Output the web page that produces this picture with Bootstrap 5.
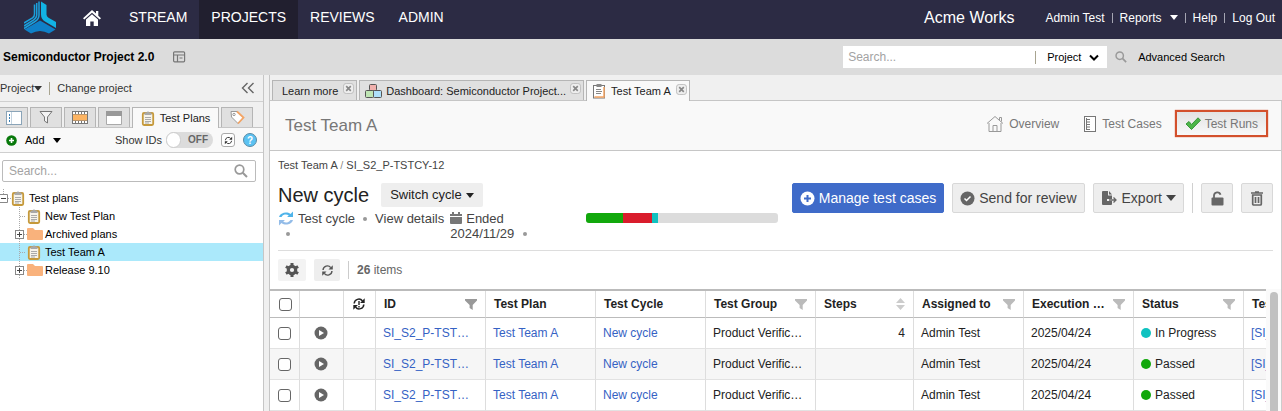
<!DOCTYPE html>
<html lang="en">
<head>
<meta charset="utf-8">
<meta name="viewport" content="width=device-width, initial-scale=1">
<title>Test Team A - Test Runs</title>
<link href="https://cdn.jsdelivr.net/npm/bootstrap@5.3.0/dist/css/bootstrap.min.css" rel="stylesheet">
<style>
body{font-family:"Liberation Sans",Arial,sans-serif;font-size:11px;line-height:16px;color:#222;background:#fff}
a{color:inherit;text-decoration:none}
svg{display:block;flex:none}
button{font:inherit;color:inherit;border:0;background:none;padding:0}
.caret{width:0;height:0;flex:none;border:4px solid transparent;border-top:5px solid currentColor;border-bottom:0}
.top-bar{background:#2c2b44;color:#fff;height:39px}
.top-bar .logo-link{margin:0 15px 4px 24px}
.main-nav a{font-size:14px;padding:0 12px 6px;height:39px;display:flex;align-items:center}
.main-nav a.active{background:#211f2f}
.top-user{font-size:12px;gap:7px;padding:0 7px 4px 31px}
.top-user .bar{width:1px;height:10px;background:#a5a5b2}
.org{font-size:16px;padding-bottom:4px}
.project-bar{background:#dcdcdc;height:36px;color:#000;padding:0 57px 0 3px}
.project-name{font-size:12px;font-weight:bold;margin:0}
.find-box{background:#fff;width:264px;height:22px}
.find-box input{border:0;outline:0;width:192px;font-size:12px;padding:0 5px}
.find-box select{border:0;outline:0;background:transparent;appearance:none;font-size:11px;padding:0;width:42px;color:#000}
::placeholder{color:#a3a3a3;opacity:1}
.find-rule{width:1px;height:13px;background:#a8a490}
.adv{margin-left:11px}
.side{width:264px;flex:none;border-right:1px solid #c6c6c6;background:#fff}
.gutter{width:6px;flex:none;background:#f0f0f0;border-right:1px solid #c6c6c6}
.side-menu{height:27px;background:#f0f0f0;border-bottom:1px solid #cfcfcf;color:#333}
.side-menu .find-rule{margin:0 7px}
.side-tabs{height:26px;background:#f0f0f0;border-bottom:1px solid #c6c6c6;padding-top:5px;gap:2px}
.side-tabs button{width:32px;height:20px;background:#e0e0e0;border:1px solid #b5b5b5;border-bottom:0;display:flex;align-items:center;justify-content:center}
.side-tabs button:first-child{width:28px;border-left:0}
.side-tabs button.active{width:87px;height:21px;background:#f9f9f9;gap:5px;color:#222}
.side-tools{height:25px;background:#f9f9f9;border-bottom:1px solid #cfcfcf;color:#333;padding:0 6px 0 2px}
.id-switch{width:47px;height:16px;border-radius:8px;background:#dcdcdc;position:relative;font-size:10px;font-weight:bold;color:#666;display:flex;align-items:center;justify-content:flex-end;padding-right:5px}
.id-switch input{position:absolute;left:0;top:0;width:15px;height:16px;margin:0;appearance:none;background:#fff;border:1px solid #ccc;border-radius:8px}
.sync-box{width:14px;height:14px;border:1px solid #aaa;border-radius:3px;background:#fff;display:flex;align-items:center;justify-content:center}
.side-find{height:22px;margin:7px 7px 7px 2px;border:1px solid #bbb;border-radius:2px;padding-right:7px}
.side-find input{border:0;outline:0;width:100%;min-width:0;font-size:12px;padding:0 6px;background:transparent}
.tree{color:#000;margin:0}
.tree li{height:18px;display:flex;align-items:center}
.tree li.chosen{background:#abe9fb}
.tree .twig{width:15px;height:18px;margin-left:12px}
.tree .twig.root{margin-left:-4px}
.tree .folder-name{margin-left:2px}
.doc-tabs{background:#f0f0f0;height:26px;border-bottom:1px solid #c6c6c6;padding:5px 2px 0;gap:2px}
.doc-tab{height:20px;background:#e0e0e0;border:1px solid #b5b5b5;border-bottom:0;padding:0 2px 0 9px;display:flex;align-items:center;gap:5px;color:#222}
.doc-tab.with-icon{padding-left:5px;gap:4px}
.doc-tab.active{height:21px;background:#f9f9f9;gap:5px}
.doc-tab button{margin-bottom:4px}
.doc-body{border-right:1px solid #ccc}
.page-title{background:#f9f9f9;height:50px;border-bottom:1px solid #c6c6c6;padding:0 13px 4px 15px;color:#777}
.page-title h1{font-size:17px;margin:4px 0 0;line-height:20px}
.views{gap:13px;font-size:12px}
.views a{display:flex;align-items:center;gap:5px;height:28px}
.views a:first-child{margin-right:12px}
.views a.active{border:2px solid #d3502c;box-shadow:0 0 1px #d3502c;background:linear-gradient(#e3e3e3,#f8f8f8);padding:0 8px;gap:4px;height:27px}
.crumbs{padding:6px 8px 0;line-height:16px;color:#444}
.cycle-head{padding:10px 8px 0;margin-bottom:9px}
.cycle-name{font-size:20px;line-height:24px;margin:0;color:#222}
.switch-btn{background:#eee;height:24px;padding:0 9px;border-radius:2px;font-size:13px;gap:4px;margin-left:12px}
.meta{font-size:13px;line-height:15px;color:#444;margin-top:4px}
.meta svg{vertical-align:-1px}
.dot{width:4px;height:4px;border-radius:2px;background:#999;flex:none}
.meta .between{margin:6px 8px 0}
.meta .below{margin:6px 0 0 8px}
.ended{width:77px;margin-left:6px}
.run-bar{width:192px;height:10px;border-radius:3px;background:#dcdcdc;margin-top:30px;margin-right:14px}
.run-bar .progress-bar{border-radius:0}
.act{height:30px;border:1px solid #d8d8d8;background:#eee;border-radius:2px;font-size:14px;color:#444;display:flex;align-items:center;padding:0 7px;gap:4px}
.act.main-act{background:#3f6bc9;border-color:#3f6bc9;color:#fff}
.act.square{width:32px;justify-content:center;color:#666}
.act .caret{border-width:6px 5px 0}
.act-rule{width:1px;height:30px;background:#d0d0d0}
.list-tools{margin:0 8px;border-top:1px solid #ddd;height:39px;gap:8px;color:#666;font-size:12px}
.list-tools button{height:22px;width:26px;background:#eee;display:flex;align-items:center;justify-content:center;color:#555;border-radius:2px}
.list-tools .gear{width:28px;background:#f3f3f3}
.list-tools .rule{width:1px;height:18px;background:#ccc}
.grid-wrap{overflow:hidden;border-top:2px solid #bbb}
.grid{table-layout:fixed;width:1083px;border-collapse:separate;border-spacing:0;font-size:12px;color:#222}
.grid th,.grid td{border-right:1px solid #ddd;border-bottom:1px solid #e2e2e2;padding:0 7px;height:31px;white-space:nowrap;overflow:hidden;text-overflow:ellipsis}
.grid th{height:27px;border-bottom-color:#bbb;padding:0 8px}
.grid th:first-child{padding-left:9px}
.grid td:first-child,.grid td:nth-child(8){padding:0 8px}
.grid tbody tr:nth-child(even){background:#f6f6f6}
.grid td a{color:#3562c4}
.grid input{appearance:none;width:13px;height:13px;border:1px solid #666;border-radius:3px;background:#fff;margin:0;display:block}
.grid td svg{margin-left:7px}
.fade-f{color:#bbb}
.strong-f{color:#999}
.state{width:10px;height:10px;border-radius:5px;margin-right:4px}
.scroll-track{width:15px;padding:3px 3px 0 4px;background:#fafafa}
.scroll-thumb{height:100%;background:#c1c1c1;border-radius:4px 4px 0 0}
</style>
</head>
<body>
<svg width="0" height="0" class="position-absolute" aria-hidden="true">
<symbol id="clip" viewBox="0 0 14 16"><rect x="1.8" y="3" width="10.4" height="12" rx="1.2" fill="#f6f3ea" stroke="#c5993b" stroke-width="1.8"/><path d="M3.500 2.500h2a1.600 1.600 0 0 1 3 0h2V5h-7z" fill="#a8a8a8"/><path d="M4 7.500h6M4 9.500h6M4 11.500h6M4 13h4" stroke="#aaa"/></symbol>
<symbol id="folder" viewBox="0 0 16 14"><path d="M0 2a1 1 0 0 1 1-1h5l2 2h7a1 1 0 0 1 1 1v8a1 1 0 0 1-1 1H1a1 1 0 0 1-1-1z" fill="#f9b27c"/></symbol>
<symbol id="lens" viewBox="0 0 14 14"><circle cx="5.500" cy="5.500" r="4.300" fill="none" stroke="#999" stroke-width="1.700"/><path d="m8.700 8.700 4.300 4.300" stroke="#999" stroke-width="2"/></symbol>
<symbol id="funnel" viewBox="0 0 12 11"><path d="M0 0h12v1.500L7.700 6v5L4.600 9V6L0 1.500z" fill="currentColor"/></symbol>
<symbol id="close" viewBox="0 0 12 12"><rect x=".5" y=".5" width="11" height="11" rx="3" fill="#eee" stroke="#bbb"/><path d="m3.500 3.500 5 5m0-5-5 5" stroke="#888" stroke-width="1.800"/></symbol>
<symbol id="play" viewBox="0 0 14 14"><circle cx="7" cy="7" r="6.500" fill="#666"/><path d="M5 4v6l5-3z" fill="#fff"/></symbol>
<symbol id="sync" viewBox="0 0 16 16"><path d="M2.500 7.500a5.300 5.300 0 0 1 9.500-3M13.500 8.500a5.300 5.300 0 0 1-9.500 3" fill="none" stroke="currentColor" stroke-width="1.700"/><path d="M14.500 1.500v5.300H9.200zM1.500 14.500V9.200h5.300z" fill="currentColor"/></symbol>
<symbol id="plusbox" viewBox="0 0 15 18"><path d="M7.500 0v18M12 9.500h3" stroke="#aaa" stroke-dasharray="1 1"/><rect x="3.500" y="5.500" width="8" height="8" fill="#fff" stroke="#888"/><path d="M5 9.500h5M7.500 7v5" stroke="#444"/></symbol>
<symbol id="twig" viewBox="0 0 15 18"><path d="M7.500 0v18M8 9.500h6" stroke="#aaa" stroke-dasharray="1 1"/></symbol>
</svg>

<header class="top-bar d-flex align-items-center">
  <a href="#" class="logo-link" aria-label="Home page"><svg width="32" height="33" viewBox="0 0 32 33"><path d="M17 0.500 22.500 4v9.500q0 2 2 3.200L32 21v6l-11-6.500q-4-2.500-4-7z" fill="#12b2e4"/><path d="M15 .5V14q0 4-4 6.500L0 27.500M12.700 2v12q0 3-3 4.800L0 25M10.500 3.500V13q0 2.500-2 3.800L0 22" fill="none" stroke="#1aa0dc" stroke-width="1.500"/><path d="M16 19.500 31.500 28.500 25 32.500q-9-5-18 0L.5 28.500z" fill="#0f80c8"/></svg></a>
  <nav class="main-nav d-flex" aria-label="Main">
    <a href="#" class="pe-3" aria-label="Home"><svg width="18" height="17" viewBox="0 0 18 17" class="mt-1"><path d="M9 0 0 8.200l1.300 1.400L9 2.800l7.700 6.800L18 8.200l-2.700-2.500V1H13v2.600z" fill="#fff"/><path d="M3 9.600 9 4.300l6 5.300V16h-4.300v-4.500H7.300V16H3z" fill="#fff"/></svg></a>
    <a href="#">STREAM</a><a href="#" class="active">PROJECTS</a><a href="#">REVIEWS</a><a href="#">ADMIN</a>
  </nav>
  <div class="org ms-auto">Acme Works</div>
  <nav class="top-user d-flex align-items-center" aria-label="Account">
    <a href="#">Admin Test</a><span class="bar"></span><a href="#" class="d-flex align-items-center gap-2">Reports <span class="caret"></span></a><span class="bar"></span><a href="#">Help</a><span class="bar"></span><a href="#">Log Out</a>
  </nav>
</header>

<section class="project-bar d-flex align-items-center">
  <h2 class="project-name">Semiconductor Project 2.0</h2>
  <svg class="ms-3" width="20" height="12" viewBox="-3 0 20 12"><g fill="none" stroke="#777" stroke-width="1.200"><rect x=".6" y=".8" width="11" height="10" rx="1"/><path d="M1 4h11M4.500 4v7M6.500 7h3"/></g></svg>
  <div class="find-box d-flex align-items-center ms-auto">
    <input type="text" placeholder="Search..." aria-label="Search all">
    <span class="find-rule"></span>
    <select class="ms-auto" aria-label="Search scope"><option>Project</option></select>
    <svg class="me-2" width="10" height="7" viewBox="0 0 10 7"><path d="m1 1.500 4 4 4-4" fill="none" stroke="#000" stroke-width="2"/></svg>
  </div>
  <svg class="ms-2" width="12" height="12"><use href="#lens"/></svg>
  <a href="#" class="adv">Advanced Search</a>
</section>

<div class="d-flex">
  <aside class="side">
    <div class="side-menu d-flex align-items-center">
      <button class="d-flex align-items-center">Project<span class="caret"></span></button><span class="find-rule"></span><a href="#">Change project</a>
      <button class="ms-auto me-2" aria-label="Collapse panel"><svg width="14" height="12" viewBox="0 0 14 12"><path d="M6.500 1 1.500 6l5 5M12.500 1l-5 5 5 5" fill="none" stroke="#666" stroke-width="1.400"/></svg></button>
    </div>
    <div class="side-tabs d-flex">
      <button aria-label="Explorer"><svg width="16" height="14"><rect x=".5" y=".5" width="15" height="13" fill="#fff" stroke="#8aa4b8"/><path d="M5.500 1v12" stroke="#c3d3e0"/><path d="M3 4h1M3 7h1M3 10h1" stroke="#3a7fb5" stroke-width="2"/></svg></button>
      <button aria-label="Filters"><svg width="14" height="15"><path d="M1 1.500h12L8.500 7v6l-3-2V7z" fill="#f4f4f4" stroke="#777"/></svg></button>
      <button aria-label="Releases"><svg width="16" height="13"><path fill="#777" d="M0 0h16v13H0z"/><path d="M1 2h14" stroke="#fff" stroke-width="2" stroke-dasharray="2 1"/><path d="M1 5h14M1 8h14" stroke="#fdb462" stroke-width="3"/><path d="M1 11h14" stroke="#fff" stroke-width="2" stroke-dasharray="2 1"/></svg></button>
      <button aria-label="Components"><svg width="16" height="14"><path fill="#fff" stroke="#aaa" d="M.5.5h15v13H.5z"/><path d="M0 0h16v5H0z" fill="#999"/></svg></button>
      <button class="active"><svg width="14" height="16"><use href="#clip"/></svg>Test Plans</button>
      <button aria-label="Tags"><svg width="15" height="15"><path d="M1 1.500h6l6.500 6-5.500 6L1.500 7z" fill="#fff" stroke="#999"/><path d="m7 1.500 6.500 6L8 13.500" fill="none" stroke="#f3a566" stroke-width="1.800"/><circle cx="4" cy="4.500" r="1.200" fill="none" stroke="#999"/></svg></button>
    </div>
    <div class="side-tools d-flex align-items-center">
      <button class="d-flex align-items-center text-black"><svg class="mx-1" width="11" height="11" viewBox="0 0 11 11"><circle cx="5.500" cy="5.500" r="5.300" fill="#08790b"/><path d="M3 5.500h5M5.500 3v5" stroke="#fff" stroke-width="1.600"/></svg><span class="mx-1">Add</span><span class="caret ms-1"></span></button>
      <label for="ids" class="ms-auto me-1">Show IDs</label>
      <span class="id-switch"><input type="checkbox" id="ids">OFF</span>
      <button class="sync-box mx-2" aria-label="Sync"><svg width="9" height="9"><use href="#sync"/></svg></button>
      <button aria-label="Help"><svg width="14" height="14"><circle cx="7" cy="7" r="6.500" fill="#5bc2f2" stroke="#5a8ba5"/><text x="7" y="10.500" font-size="10" font-weight="bold" text-anchor="middle" fill="#fff">?</text></svg></button>
    </div>
    <div class="side-find d-flex align-items-center"><input type="text" placeholder="Search..." aria-label="Search plans"><svg width="14" height="14"><use href="#lens"/></svg></div>
    <ul class="tree list-unstyled">
      <li><svg class="twig root" viewBox="0 0 15 18"><path d="M7.500 0v5M12 9.500h3" stroke="#aaa" stroke-dasharray="1 1"/><path d="M3.500 5.500h8v8h-8z" fill="#fff" stroke="#888"/><path d="M5 9.500h5" stroke="#444"/></svg><svg width="14" height="16"><use href="#clip"/></svg><span class="ms-1">Test plans</span></li>
      <li><svg class="twig"><use href="#twig"/></svg><svg width="14" height="16"><use href="#clip"/></svg><span class="ms-1">New Test Plan</span></li>
      <li><svg class="twig"><use href="#plusbox"/></svg><svg width="16" height="14"><use href="#folder"/></svg><span class="folder-name">Archived plans</span></li>
      <li class="chosen"><svg class="twig"><use href="#twig"/></svg><svg width="14" height="16"><use href="#clip"/></svg><span class="ms-1">Test Team A</span></li>
      <li><svg class="twig"><use href="#plusbox"/></svg><svg width="16" height="14"><use href="#folder"/></svg><span class="folder-name">Release 9.10</span></li>
    </ul>
  </aside>
  <div class="gutter"></div>

  <main class="flex-grow-1 overflow-hidden">
    <div class="doc-tabs d-flex">
      <div class="doc-tab"><a href="#">Learn more</a><button aria-label="Close"><svg width="11" height="11"><use href="#close"/></svg></button></div>
      <div class="doc-tab with-icon"><svg width="17" height="15"><g stroke="#555"><rect x="4.500" y="1.500" width="7" height="6" rx="1" fill="#f0b0ac"/><rect x=".5" y="7.500" width="8" height="7" rx="1" fill="#bfe5b4"/><rect x="8.500" y="7.500" width="8" height="7" rx="1" fill="#aee0fa"/></g></svg><a href="#">Dashboard: Semiconductor Project...</a><button aria-label="Close"><svg width="11" height="11"><use href="#close"/></svg></button></div>
      <div class="doc-tab with-icon active"><svg width="14" height="16" viewBox="0 0 14 16"><rect x="1.500" y="2.500" width="11" height="12.500" fill="#fff" stroke="#777"/><path d="M2.500 14h9.500V4" fill="none" stroke="#f3a566" stroke-width="1.500"/><path d="M4.500 1h5v3h-5z" fill="#888"/><path d="M4 6.500h5M4 8.500h6M4 10.500h5" stroke="#888"/></svg><a href="#">Test Team A</a><button aria-label="Close"><svg width="11" height="11"><use href="#close"/></svg></button></div>
    </div>
    <div class="doc-body">
    <div class="page-title d-flex align-items-center justify-content-between">
      <h1>Test Team A</h1>
      <nav class="views d-flex align-items-center" aria-label="Views">
        <a href="#"><svg width="18" height="17"><path d="M1 8.500 9 1.500l8 7M3 8v8.500h12V8M7 16v-5.500h4V16M13.500 5V2.500h2v4" fill="none" stroke="#999"/></svg>Overview</a>
        <a href="#"><svg width="13" height="16"><rect x=".5" y=".5" width="11" height="15" fill="#fff" stroke="#777"/><path d="M2.500 2v12M3 3.500h3M3 6h3M3 8.500h3M3 11h3M3 13.500h3" stroke="#777"/></svg>Test Cases</a>
        <a href="#" class="active"><svg width="16" height="13"><path d="m1 7 3-2.500 2.500 3L13 .8l2.500 2.500L6.500 12.500z" fill="#4cb648" stroke="#38963a"/></svg>Test Runs</a>
      </nav>
    </div>
    <div class="crumbs"><a href="#">Test Team A</a> <span class="text-black-50">/</span> <a href="#">SI_S2_P-TSTCY-12</a></div>

    <section class="cycle-head d-flex align-items-start">
      <div>
        <div class="d-flex align-items-center"><h2 class="cycle-name">New cycle</h2><button class="switch-btn d-flex align-items-center">Switch cycle <span class="caret"></span></button></div>
        <div class="meta d-flex align-items-start">
          <div><span class="d-flex align-items-center"><svg width="16" height="15" viewBox="0 0 16 15"><path d="M1 6a7 6 0 0 1 11.500-3L15 .5V6H9l1.800-1.600A5 5 0 0 0 3.500 6z" fill="#4fb4ea"/><path d="M15 9A7 6 0 0 1 3.500 12L1 14.500V9h6l-1.800 1.600A5 5 0 0 0 12.500 9z" fill="#93bce8"/></svg><span class="ms-1">Test cycle</span></span><span class="dot below d-block"></span></div>
          <span class="dot between"></span><a href="#">View details</a>
          <div class="ended"><svg class="d-inline-block me-1" width="12" height="12" viewBox="0 0 12 12"><path d="M0 2h2V0h2v2h4V0h2v2h2v2H0zM0 5h12v6a1 1 0 0 1-1 1H1a1 1 0 0 1-1-1z" fill="#777"/></svg>Ended<span class="d-flex align-items-center justify-content-between">2024/11/29 <span class="dot"></span></span></div>
        </div>
      </div>
      <div class="progress run-bar ms-auto" role="progressbar" aria-label="Run results">
        <div class="progress-bar" style="width:19.200%;background:#12a80c"></div><div class="progress-bar" style="width:15.200%;background:#d91c2c"></div><div class="progress-bar" style="width:3.100%;background:#0fc2c0"></div>
      </div>
      <div class="d-flex gap-2">
        <button class="act main-act"><svg width="15" height="15"><circle cx="7.500" cy="7.500" r="7" fill="#fff"/><path d="M4 7.500h7M7.500 4v7" stroke="#3f6bc9" stroke-width="2"/></svg>Manage test cases</button>
        <button class="act"><svg width="15" height="15"><circle cx="7.500" cy="7.500" r="7" fill="#666"/><path d="m4.500 7.500 2 2 4-4" fill="none" stroke="#fff" stroke-width="1.500"/></svg>Send for review</button>
        <button class="act"><svg width="17" height="15"><path d="M1 1a1 1 0 0 1 1-1h5v4.500h4V8H6v2h5v3a1 1 0 0 1-1 1H2a1 1 0 0 1-1-1zM8 0l3 3.500H8z" fill="#666"/><path d="M8 9h7m-2.500-2.500L15 9l-2.500 2.500" fill="none" stroke="#666" stroke-width="1.300"/></svg>Export <span class="caret"></span></button>
        <span class="act-rule"></span>
        <button class="act square" aria-label="Unlock"><svg width="13" height="15"><path d="M3 7V4.500a3.300 3.300 0 0 1 6.500-.7" fill="none" stroke="#666" stroke-width="1.800"/><rect x=".5" y="6.500" width="12" height="8" rx="1" fill="#666"/></svg></button>
        <button class="act square" aria-label="Delete"><svg width="12" height="15"><path d="M0 2h12M4 1h4" stroke="#666" stroke-width="1.700"/><path d="M1.700 4h8.600v9a1 1 0 0 1-1 1H2.700a1 1 0 0 1-1-1zM4.500 6v6M7.500 6v6" fill="none" stroke="#666" stroke-width="1.700"/></svg></button>
      </div>
    </section>

    <div class="list-tools d-flex align-items-center">
      <button class="gear" aria-label="Settings"><svg width="14" height="14" viewBox="0 0 14 14"><circle cx="7" cy="7" r="3.700" fill="none" stroke="#555" stroke-width="3.200"/><path d="M7 0v3M7 11v3M.9 3.500l2.600 1.500M10.500 9l2.600 1.500M.9 10.500 3.500 9M10.500 5l2.600-1.500" stroke="#555" stroke-width="3"/></svg></button>
      <button aria-label="Refresh"><svg width="13" height="13"><use href="#sync"/></svg></button>
      <span class="rule"></span><span><b>26</b> items</span>
    </div>

    <div class="d-flex">
      <div class="grid-wrap flex-grow-1">
        <table class="grid">
          <colgroup><col width="30"><col width="44"><col width="32"><col width="110"><col width="110"><col width="110"><col width="110"><col width="98"><col width="110"><col width="110"><col width="110"><col width="109"></colgroup>
          <thead><tr>
            <th><input type="checkbox" aria-label="Select all"></th><th></th>
            <th aria-label="Sync state"><svg width="14" height="14" viewBox="0 0 16 16"><use href="#sync"/><path d="M8 4.500V9m0 1.300V12" stroke="#222" stroke-width="1.600"/></svg></th>
            <th><div class="d-flex align-items-center justify-content-between">ID<svg class="strong-f" width="12" height="11"><use href="#funnel"/></svg></div></th>
            <th>Test Plan</th><th>Test Cycle</th>
            <th><div class="d-flex align-items-center justify-content-between">Test Group<svg class="fade-f" width="12" height="11"><use href="#funnel"/></svg></div></th>
            <th><div class="d-flex align-items-center justify-content-between">Steps<svg width="9" height="12"><path d="M0 5h9L4.500 0zM0 7h9l-4.500 5z" fill="#ccc"/></svg></div></th>
            <th><div class="d-flex align-items-center justify-content-between">Assigned to<svg class="fade-f" width="12" height="11"><use href="#funnel"/></svg></div></th>
            <th><div class="d-flex align-items-center justify-content-between">Execution …<svg class="fade-f" width="12" height="11"><use href="#funnel"/></svg></div></th>
            <th><div class="d-flex align-items-center justify-content-between">Status<svg class="fade-f" width="12" height="11"><use href="#funnel"/></svg></div></th>
            <th>Test</th>
          </tr></thead>
          <tbody>
            <tr><td><input type="checkbox" aria-label="Select run"></td><td><svg width="14" height="14"><use href="#play"/></svg></td><td></td><td><a href="#">SI_S2_P-TST…</a></td><td><a href="#">Test Team A</a></td><td><a href="#">New cycle</a></td><td>Product Verific…</td><td class="text-end">4</td><td>Admin Test</td><td>2025/04/24</td><td><div class="d-flex align-items-center"><span class="state" style="background:#0fc2c0"></span>In Progress</div></td><td><a href="#">[SI_</a></td></tr>
            <tr><td><input type="checkbox" aria-label="Select run"></td><td><svg width="14" height="14"><use href="#play"/></svg></td><td></td><td><a href="#">SI_S2_P-TST…</a></td><td><a href="#">Test Team A</a></td><td><a href="#">New cycle</a></td><td>Product Verific…</td><td></td><td>Admin Test</td><td>2025/04/24</td><td><div class="d-flex align-items-center"><span class="state" style="background:#12a80c"></span>Passed</div></td><td><a href="#">[SI_</a></td></tr>
            <tr><td><input type="checkbox" aria-label="Select run"></td><td><svg width="14" height="14"><use href="#play"/></svg></td><td></td><td><a href="#">SI_S2_P-TST…</a></td><td><a href="#">Test Team A</a></td><td><a href="#">New cycle</a></td><td>Product Verific…</td><td></td><td>Admin Test</td><td>2025/04/24</td><td><div class="d-flex align-items-center"><span class="state" style="background:#12a80c"></span>Passed</div></td><td><a href="#">[SI_</a></td></tr>
          </tbody>
        </table>
      </div>
      <div class="scroll-track flex-shrink-0"><div class="scroll-thumb"></div></div>
    </div>
    </div>
  </main>
</div>
<script src="https://cdn.jsdelivr.net/npm/bootstrap@5.3.0/dist/js/bootstrap.bundle.min.js"></script>
</body>
</html>
